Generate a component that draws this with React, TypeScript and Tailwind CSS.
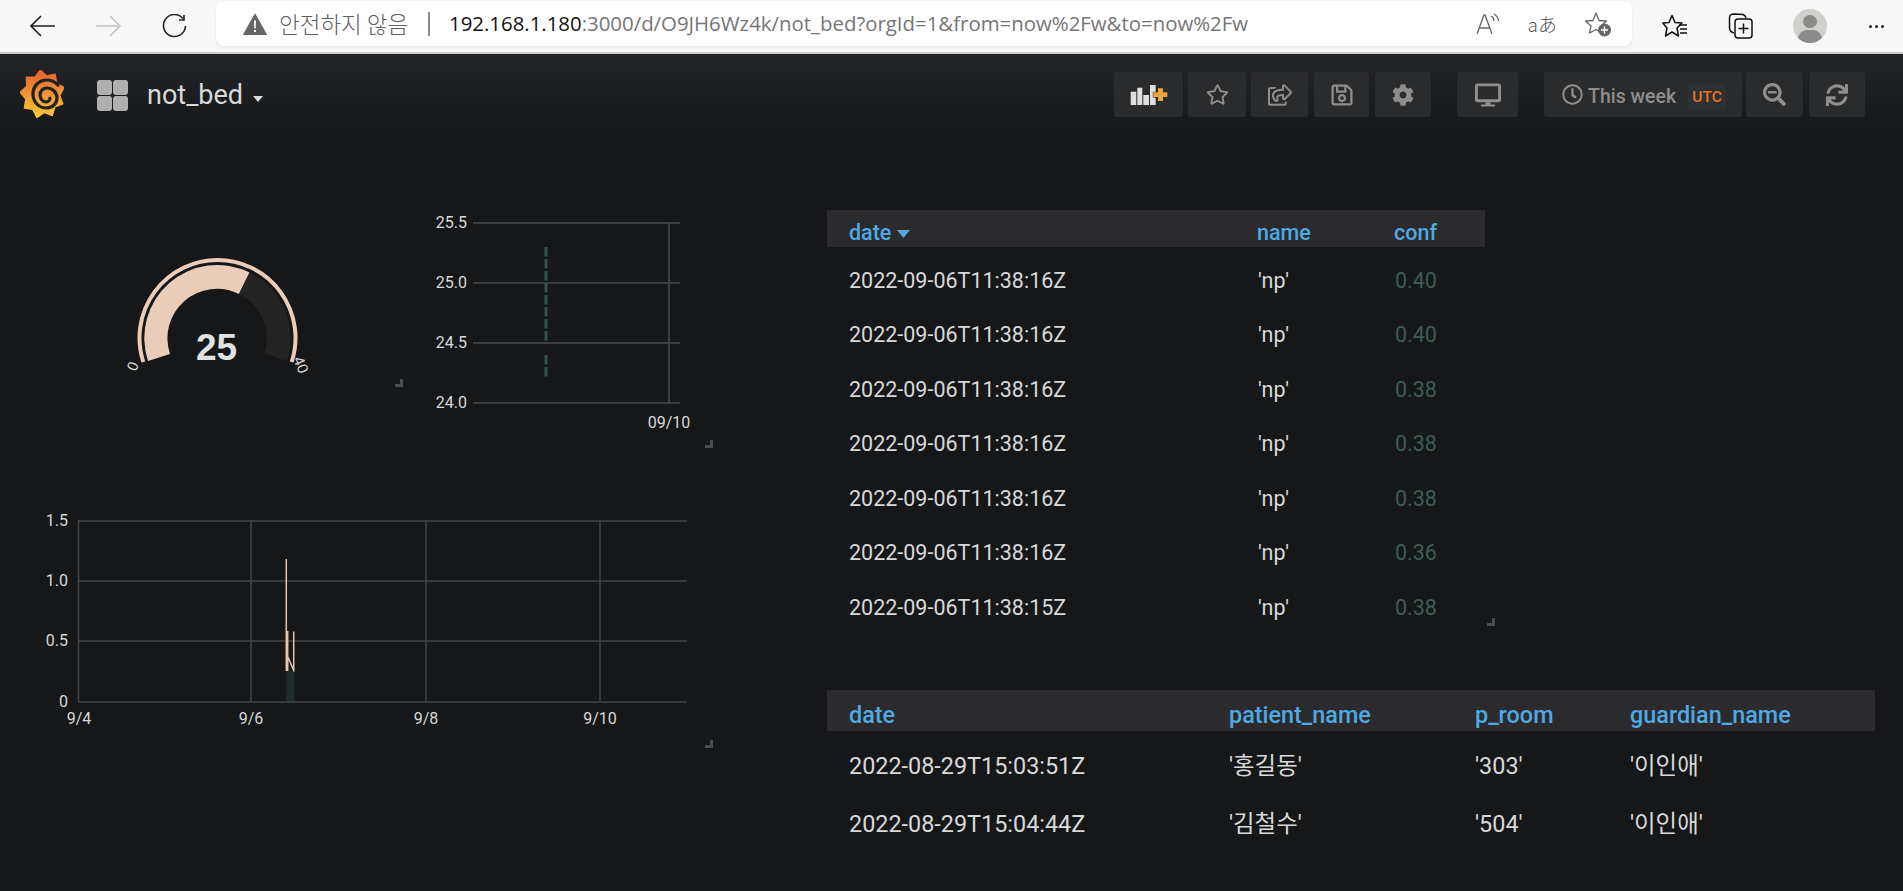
import { FaCog, FaDesktop, FaRegClock, FaRegSave, FaRegShareSquare, FaRegStar, FaSearchMinus, FaSync } from "react-icons/fa";

const sans = "font-['Roboto','Noto_Sans_CJK_KR',sans-serif]";

const logoTeeth = Array.from({ length: 18 }, (_, i) => {
  const a = (i * Math.PI) / 9 - Math.PI / 2 - 0.1;
  const r = i % 2 === 0 ? 24 : 18.5;
  return `${(22.5 + r * 0.93 * Math.cos(a)).toFixed(1)},${(24 + r * Math.sin(a)).toFixed(1)}`;
}).join(" ");

const GrafanaLogo = () => (
  <svg width="44" height="48" viewBox="0 0 44 48" className="block">
    <defs>
      <linearGradient id="logoFill" x1="0" y1="0" x2="0" y2="1">
        <stop offset="0" stopColor="#e5602f" />
        <stop offset="1" stopColor="#fbca3a" />
      </linearGradient>
    </defs>
    <polygon points={logoTeeth} fill="url(#logoFill)" stroke="url(#logoFill)" strokeWidth="1.5" strokeLinejoin="round" />
    <path
      d="M38 15C34 11 30 10 27 10C19 10 13 16 13 24C13 32 19 38 26 38C32 38 37 34 37 28C37 22 32 18 27 18C23 18 20 21 20 25C20 29 23 32 26 32C28.5 32 30 30 30 28"
      fill="none"
      stroke="#1f2124"
      strokeWidth="3.2"
      strokeLinecap="round"
    />
  </svg>
);

const NavButton = ({ className, children }: { className: string; children: React.ReactNode }) => (
  <div className={`flex h-[45px] items-center justify-center rounded-[3px] bg-[#2a2b2d] text-[#8e8e8e] ${className}`}>
    {children}
  </div>
);

const ResizeHandle = ({ className }: { className: string }) => (
  <svg width="8" height="8" viewBox="0 0 8 8" className={`absolute ${className}`}>
    <path d="M5 0H8V8H0V5H5Z" fill="#4a4c50" />
  </svg>
);

const BrowserBar = () => (
  <div className="flex h-[54px] items-start border-b-2 border-[#c9c9c9] bg-[#f7f7f7]">
    <div className="flex h-[52px] w-[216px] items-center pl-[30px]">
      <svg width="25" height="22" viewBox="0 0 25 22" fill="none" stroke="#222" strokeWidth="1.6">
        <path d="M25 11H1M11 1 1 11 11 21" />
      </svg>
      <svg width="25" height="22" viewBox="0 0 25 22" fill="none" stroke="#c4c4c4" strokeWidth="1.6" className="ml-[41px]">
        <path d="M0 11H24M14 1 24 11 14 21" />
      </svg>
      <svg width="25" height="25" viewBox="0 0 25 25" fill="none" stroke="#222" strokeWidth="1.6" className="ml-[41px]">
        <path d="M21 4.5A11 11 0 1 0 23.5 12M22 1v5h-5" />
      </svg>
    </div>

    {/* Address bar */}
    <div className="mt-px flex h-[45px] w-[1416px] items-center rounded-lg bg-white shadow-[0_1px_3px_rgba(0,0,0,0.08)]">
      <svg width="24" height="22" viewBox="0 0 24 22" className="ml-[27px]">
        <path d="M12 1 23.5 21.5H.5Z" fill="#666" stroke="#666" strokeLinejoin="round" />
        <path d="M11 7.5h2l-.3 8h-1.4ZM11 17h2v2h-2Z" fill="#fff" />
      </svg>
      <span className="ml-[12px] w-[130px] font-['Noto_Sans_CJK_KR',sans-serif] text-[22.5px] font-light whitespace-nowrap text-[#5f5f5f]">
        안전하지 않음
      </span>
      <div className="ml-[19px] h-[24px] w-[2px] bg-[#8c8c8c]" />
      <span className="ml-[19px] font-['Open_Sans',sans-serif] text-[20.4px] whitespace-nowrap text-[#767676]">
        <span className="text-[#111]">192.168.1.180</span>:3000/d/O9JH6Wz4k/not_bed?orgId=1&amp;from=now%2Fw&amp;to=now%2Fw
      </span>
      <div className="ml-auto flex items-center pr-[20px]">
        <svg width="24" height="22" viewBox="0 0 24 22" fill="none" stroke="#666" strokeWidth="1.3">
          <path d="M1 21 8 2h1l7 19M3.5 15h11M15 3c2 1 3 3 3 5M18 1c3 2 4.5 4 4.5 7" />
        </svg>
        <span className="ml-[28px] font-['Noto_Sans_CJK_JP',sans-serif] text-[19px] leading-none font-light text-[#555]">aあ</span>
        <svg width="28" height="26" viewBox="0 0 28 26" className="ml-[27px]">
          <path d="M12 2 15 9.5 22.5 10 17 15 18.5 22 12 18.5 5.5 22 7 15 1.5 10 9 9.5Z" fill="none" stroke="#666" strokeWidth="1.3" strokeLinejoin="round" />
          <circle cx="20.5" cy="19" r="6.5" fill="#666" />
          <path d="M17 19h7M20.5 15.5v7" stroke="#fff" strokeWidth="1.4" />
        </svg>
      </div>
    </div>

    {/* Toolbar right */}
    <div className="flex h-[52px] flex-1 items-center">
      <svg width="26" height="24" viewBox="0 0 26 24" fill="none" stroke="#111" strokeWidth="1.5" className="ml-[30px]">
        <path d="M10 1.5 13 8.5 20 9 15 14 16.5 22 10 18 3.5 22 5 14 0.8 9 7 8.5Z" strokeLinejoin="round" />
        <path d="M17 11h8M18 15h7M18 19h7" />
      </svg>
      <svg width="26" height="26" viewBox="0 0 26 26" fill="none" stroke="#111" strokeWidth="1.5" className="ml-[40px]">
        <path d="M6 20C3 19 1.5 18 1.5 15V5C1.5 2 4 1 6 1L15 1.5C17 2 17.5 3 18 5" />
        <rect x="7" y="6" width="17" height="19" rx="3" />
        <path d="M15.5 10.5v10M10.5 15.5h10" />
      </svg>
      <div className="relative ml-[39px] h-[34px] w-[34px] overflow-hidden rounded-full bg-[#d0d0cc]">
        <div className="absolute left-[10px] top-[6px] h-[13px] w-[14px] rounded-full bg-[#8b8b8b]" />
        <div className="absolute left-[5px] top-[21px] h-[18px] w-[24px] rounded-full bg-[#8b8b8b]" />
      </div>
      <div className="ml-[42px] flex gap-[3px]">
        <div className="h-[3px] w-[3px] rounded-full bg-[#222]" />
        <div className="h-[3px] w-[3px] rounded-full bg-[#222]" />
        <div className="h-[3px] w-[3px] rounded-full bg-[#222]" />
      </div>
    </div>
  </div>
);

const DashNav = () => (
  <div className={`flex h-[76px] items-start bg-gradient-to-b from-[#222427] to-[#17181a] ${sans}`}>
    <div className="ml-[20px] mt-[16px]">
      <GrafanaLogo />
    </div>
    <div className="ml-[33px] mt-[26px] grid h-[31px] w-[31px] grid-cols-2 gap-px">
      <div className="rounded-[3px] bg-[#b0b0b0]" />
      <div className="rounded-[3px] bg-[#b0b0b0]" />
      <div className="rounded-[3px] bg-[#b0b0b0]" />
      <div className="rounded-[3px] bg-[#b0b0b0]" />
    </div>
    <div className="ml-[19px] mt-[22px] text-[27px] leading-[38px] text-[#d8d9da]">not_bed</div>
    <svg width="10" height="6" viewBox="0 0 10 6" className="ml-[10px] mt-[42px]">
      <path d="M0 0H10L5 6Z" fill="#d8d9da" />
    </svg>

    <div className="ml-auto mt-[18px] flex pr-[38px]">
      <NavButton className="w-[69px]">
        <svg width="38" height="20" viewBox="0 0 38 20">
          <path d="M.7 6.7h5.6V20H.7ZM7.3 2.7h5V20h-5ZM13.3 10H19v10h-5.7ZM20 0h5.7v20H20Z" fill="#dedede" />
          <path d="M28 3.3h5v4h4.3v4.8H33v4h-5v-4h-4.7V7.300H28Z" fill="#eba53a" stroke="#2a2b2d" strokeWidth="1" paintOrder="stroke" />
        </svg>
      </NavButton>
      <NavButton className="ml-[5px] w-[58px]"><FaRegStar size={23} /></NavButton>
      <NavButton className="ml-[5px] w-[57px]"><FaRegShareSquare size={24} /></NavButton>
      <NavButton className="ml-[6px] w-[55px]"><FaRegSave size={24} /></NavButton>
      <NavButton className="ml-[6px] w-[56px]"><FaCog size={22} /></NavButton>
      <NavButton className="ml-[26px] w-[61px]"><FaDesktop size={26} /></NavButton>
      <NavButton className="ml-[26px] w-[198px] justify-start pl-[18px]">
        <FaRegClock size={21} />
        <span className="ml-[5px] pt-[5px] text-[19.5px] font-medium">This week</span>
        <span className="ml-[12px] mt-[6px] flex h-[27px] w-[38px] items-center justify-center rounded-[3px] bg-[#2f3032] text-[15.5px] font-medium text-[#e8742a]">UTC</span>
      </NavButton>
      <NavButton className="ml-[4px] w-[57px]"><FaSearchMinus size={23} /></NavButton>
      <NavButton className="ml-[6px] w-[56px]"><FaSync size={22} /></NavButton>
    </div>
  </div>
);

const Gauge = () => (
  <div className="relative h-[177px] w-[403px]">
    <svg width="403" height="177" viewBox="0 210 403 177" className="block">
      <path d="M143.3 362 A78 78 0 1 1 291.7 362" fill="none" stroke="#eacdb9" strokeWidth="4" />
      <path d="M148 361 A73 73 0 0 1 249.500 272.500 L 239 294 A49.5 49.5 0 0 0 170 354 Z" fill="#eacdb9" />
      <path d="M249.500 272.500 A73 73 0 0 1 287 361 L 264.5 353.5 A49.5 49.5 0 0 0 239 294 Z" fill="#232323" />
      <text x="216.5" y="360" textAnchor="middle" fontFamily="Liberation Sans, sans-serif" fontWeight="700" fontSize="37" fill="#e1e2e3">25</text>
      <text x="0" y="0" transform="translate(136 372) rotate(-68)" fontFamily="Liberation Sans, sans-serif" fontSize="15" fill="#d8d9da">0</text>
      <text x="0" y="0" transform="translate(293 359) rotate(68)" fontFamily="Liberation Sans, sans-serif" fontSize="15" fill="#d8d9da">40</text>
    </svg>
    <ResizeHandle className="bottom-0 right-0" />
  </div>
);

const SmallChart = () => {
  const dashes = [247, 259, 271, 283, 295, 307, 319, 331, 355, 367];
  return (
    <div className="relative ml-[17px] h-[238px] w-[296px]">
      <svg width="296" height="238" viewBox="420 210 296 238" className="block">
        {[223, 283, 343, 403].map((y) => (
          <line key={y} x1="473" x2="680" y1={y} y2={y} stroke="#4a4b4d" strokeWidth="1.5" />
        ))}
        <line x1="669" x2="669" y1="223" y2="403" stroke="#4a4b4d" strokeWidth="1.5" />
        {dashes.map((y) => (
          <rect key={y} x="544.5" y={y} width="3" height="9.5" fill="#33534d" />
        ))}
        <g fontFamily="Roboto, sans-serif" fontSize="16" fill="#d8d9da" textAnchor="end">
          <text x="467" y="228">25.5</text>
          <text x="467" y="288">25.0</text>
          <text x="467" y="348">24.5</text>
          <text x="467" y="408">24.0</text>
        </g>
        <text x="669" y="428" textAnchor="middle" fontFamily="Roboto, sans-serif" fontSize="16" fill="#d8d9da">09/10</text>
      </svg>
      <ResizeHandle className="bottom-0 right-[3px]" />
    </div>
  );
};

const LargeChart = () => (
  <div className="relative mt-[62px] h-[238px] w-[716px]">
    <svg width="716" height="238" viewBox="0 510 716 238" className="block">
      {[521, 581, 641, 702].map((y) => (
        <line key={y} x1="78" x2="687" y1={y} y2={y} stroke="#434446" strokeWidth="1.5" />
      ))}
      {[78.5, 251, 426, 600].map((x) => (
        <line key={x} x1={x} x2={x} y1="520" y2="702" stroke="#434446" strokeWidth="1.5" />
      ))}
      <rect x="286" y="671" width="8.5" height="30" fill="#1f2b2a" />
      <path d="M286.3 671V559M287.7 671V631M287.5 656 293.5 670M293.7 671.5V631.5" fill="none" stroke="#e5c6b2" strokeWidth="1.5" />
      <g fontFamily="Roboto, sans-serif" fontSize="16" fill="#d8d9da" textAnchor="end">
        <text x="68" y="526">1.5</text>
        <text x="68" y="586">1.0</text>
        <text x="68" y="646">0.5</text>
        <text x="68" y="707">0</text>
      </g>
      <g fontFamily="Roboto, sans-serif" fontSize="16" fill="#d8d9da" textAnchor="middle">
        <text x="79" y="724">9/4</text>
        <text x="251" y="724">9/6</text>
        <text x="426" y="724">9/8</text>
        <text x="600" y="724">9/10</text>
      </g>
    </svg>
    <ResizeHandle className="bottom-0 right-[3px]" />
  </div>
);

const confRows = [
  ["2022-09-06T11:38:16Z", "'np'", "0.40"],
  ["2022-09-06T11:38:16Z", "'np'", "0.40"],
  ["2022-09-06T11:38:16Z", "'np'", "0.38"],
  ["2022-09-06T11:38:16Z", "'np'", "0.38"],
  ["2022-09-06T11:38:16Z", "'np'", "0.38"],
  ["2022-09-06T11:38:16Z", "'np'", "0.36"],
  ["2022-09-06T11:38:15Z", "'np'", "0.38"],
];

const patientRows = [
  ["2022-08-29T15:03:51Z", "'홍길동'", "'303'", "'이인애'"],
  ["2022-08-29T15:04:44Z", "'김철수'", "'504'", "'이인애'"],
];

const ConfTable = () => (
  <div className="relative mb-[64px] h-[416px] w-[658px] text-[21.5px]">
    <div className="grid h-[37px] grid-cols-[408px_137px_1fr] items-center bg-[#2b2b2d] pl-[22px] pt-[8px] font-medium leading-none text-[#4fa9e3]">
      <div className="flex items-center">
        date
        <svg width="13" height="8" viewBox="0 0 13 8" className="ml-[6px] mt-[2px]">
          <path d="M0 0H13L6.5 8Z" fill="#4fa9e3" />
        </svg>
      </div>
      <div>name</div>
      <div>conf</div>
    </div>
    <div className="pt-[6.5px]">
      {confRows.map(([date, name, conf], i) => (
        <div key={i} className="grid h-[54.5px] grid-cols-[408px_137px_1fr] items-center pl-[22px] text-[#d8d9da]">
          <div>{date}</div>
          <div className="pl-[1px]">{name}</div>
          <div className="pl-[1px] text-[#3d5d54]">{conf}</div>
        </div>
      ))}
    </div>
    <ResizeHandle className="bottom-0 right-[-10px]" />
  </div>
);

const PatientTable = () => (
  <div className="w-[1048px] text-[23.4px]">
    <div className="grid h-[41px] grid-cols-[380px_246px_155px_1fr] items-center bg-[#2b2b2d] pl-[22px] pt-[10px] font-medium leading-none text-[#4fa9e3]">
      <div>date</div>
      <div>patient_name</div>
      <div>p_room</div>
      <div>guardian_name</div>
    </div>
    <div className="pt-[6px]">
      {patientRows.map(([date, patient, room, guardian]) => (
        <div key={date} className="grid h-[58.5px] grid-cols-[380px_246px_155px_1fr] items-center pl-[22px] text-[#d8d9da]">
          <div>{date}</div>
          <div>{patient}</div>
          <div>{room}</div>
          <div>{guardian}</div>
        </div>
      ))}
    </div>
  </div>
);

const App = () => {
  return (
    <div className="h-[891px] w-full overflow-hidden bg-[#161719]">
      <BrowserBar />
      <DashNav />

      <div className={`flex pt-[80px] ${sans}`}>
        {/* Left */}
        <div className="w-[827px] shrink-0">
          <div className="flex">
            <Gauge />
            <SmallChart />
          </div>
          <LargeChart />
        </div>

        {/* Right */}
        <div>
          <ConfTable />
          <PatientTable />
        </div>
      </div>
    </div>
  );
};

export default App;
